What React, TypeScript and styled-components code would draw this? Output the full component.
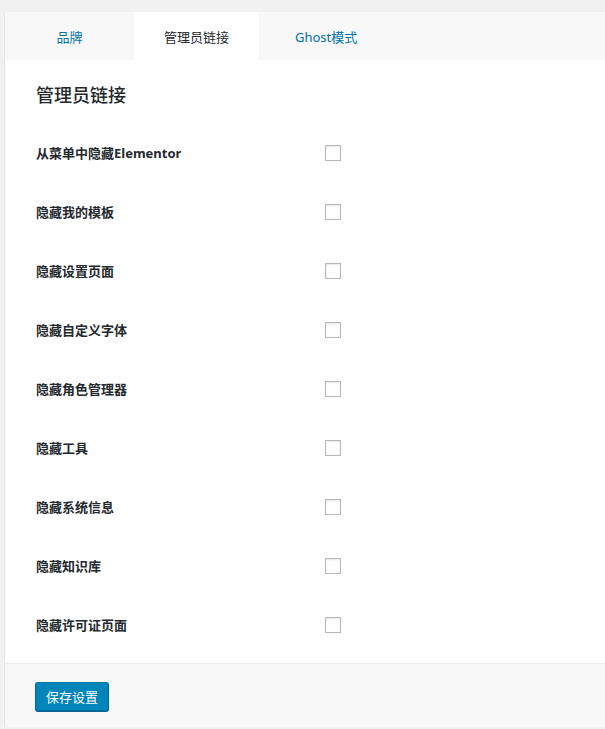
import React, { useState } from "react";
import styled, { createGlobalStyle } from "styled-components";

const Global = createGlobalStyle`
  html, body { margin: 0; padding: 0; }
  body {
    background: #f1f1f1;
    font-family: "Noto Sans", "Noto Sans CJK SC", sans-serif;
    color: #23282d;
    overflow: hidden;
  }
`;

const Page = styled.div`
  padding: 12px 0 0 5px;
`;

const Panel = styled.div`
  width: 600px;
  background: #fff;
  box-shadow: 0 1px 1px rgba(0, 0, 0, 0.06), -1px 0 1px rgba(0, 0, 0, 0.04);
`;

const TabBar = styled.div`
  display: flex;
  height: 48px;
  background: #f8f8f8;
`;

const Tab = styled.div<{ $active?: boolean; $width?: number }>`
  display: flex;
  align-items: center;
  justify-content: center;
  ${(p) => (p.$width ? `width: ${p.$width}px;` : "padding: 0 36px;")}
  font-size: 13px;
  background: ${(p) => (p.$active ? "#fff" : "transparent")};
  color: ${(p) => (p.$active ? "#23282d" : "#0073aa")};
  cursor: pointer;
`;

const Content = styled.div`
  padding: 23px 31px 9px;
`;

const Heading = styled.h2`
  margin: 0 0 16px;
  font-size: 18px;
  line-height: 24px;
  font-weight: 500;
  color: #23282d;
`;

const Row = styled.div`
  display: grid;
  grid-template-columns: 289px 16px;
  align-items: center;
  height: 59px;
`;

const Label = styled.label`
  font-size: 13px;
  line-height: 18px;
  font-weight: 700;
  color: #23282d;
`;

const Check = styled.input.attrs({ type: "checkbox" })`
  appearance: none;
  margin: 0;
  width: 16px;
  height: 16px;
  border: 1px solid #b4b9be;
  background: #fff;
  box-shadow: inset 0 1px 2px rgba(0, 0, 0, 0.1);
  box-sizing: border-box;
  cursor: pointer;
  &:checked {
    background: #0085ba;
  }
`;

const Footer = styled.div`
  border-top: 1px solid #ececec;
  background: #f8f8f8;
  padding: 18px 30px 16px;
`;

const Button = styled.button`
  height: 29px;
  padding: 0 10px;
  font-family: inherit;
  font-size: 13px;
  color: #fff;
  background: #0085ba;
  border: 1px solid #0073aa;
  border-color: #0073aa #006799 #006799;
  border-radius: 3px;
  box-shadow: 0 1px 0 #006799;
  cursor: pointer;
`;

const items = [
  "从菜单中隐藏Elementor",
  "隐藏我的模板",
  "隐藏设置页面",
  "隐藏自定义字体",
  "隐藏角色管理器",
  "隐藏工具",
  "隐藏系统信息",
  "隐藏知识库",
  "隐藏许可证页面",
];

export default function App() {
  const [checked, setChecked] = useState<boolean[]>(items.map(() => false));
  return (
    <>
      <Global />
      <Page>
        <Panel>
          <TabBar>
            <Tab $width={129}>品牌</Tab>
            <Tab $width={125} $active>
              管理员链接
            </Tab>
            <Tab>Ghost模式</Tab>
          </TabBar>
          <Content>
            <Heading>管理员链接</Heading>
            {items.map((t, i) => (
              <Row key={t}>
                <Label htmlFor={`c${i}`}>{t}</Label>
                <Check
                  id={`c${i}`}
                  checked={checked[i]}
                  onChange={() =>
                    setChecked((c) => c.map((v, j) => (j === i ? !v : v)))
                  }
                />
              </Row>
            ))}
          </Content>
          <Footer>
            <Button>保存设置</Button>
          </Footer>
        </Panel>
      </Page>
    </>
  );
}
